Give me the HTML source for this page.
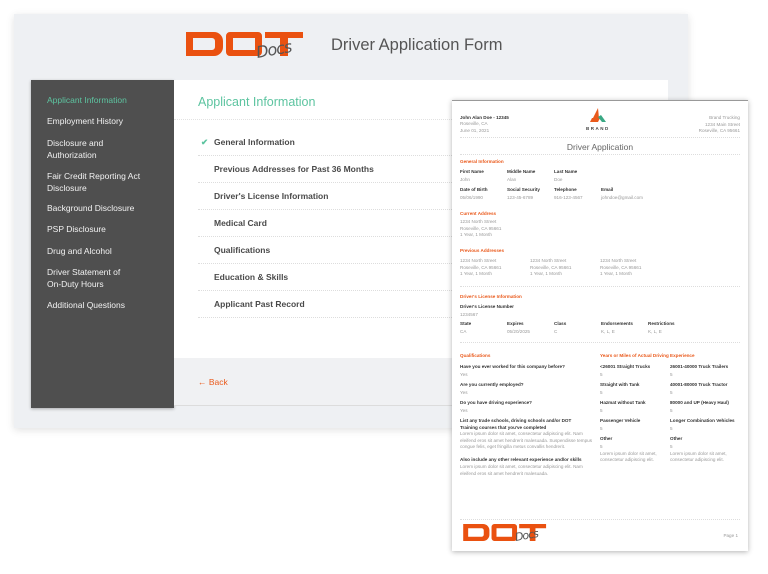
<!DOCTYPE html>
<html><head><meta charset="utf-8"><style>
*{margin:0;padding:0;box-sizing:border-box}
body{width:768px;height:574px;background:#fff;position:relative;overflow:hidden;font-family:"Liberation Sans",sans-serif}
.a{position:absolute;white-space:nowrap}
#panel{left:14px;top:14px;width:674px;height:414px;background:#eef0f3;box-shadow:0 2px 8px rgba(0,0,0,.12)}
#side{left:31px;top:80px;width:143px;height:328px;background:#4f4f4f;box-shadow:0 1px 3px rgba(0,0,0,.3)}
.si{position:absolute;left:16px;color:#f2f2f2;font-size:8.5px;line-height:12px}
#main{left:174px;top:80px;width:494px;height:278px;background:#fff}
#foot{left:174px;top:358px;width:494px;height:48px;background:#f0f1f3;border-bottom:1px solid #dcdcdc}
.row{position:absolute;left:24px;width:470px;height:27px;border-bottom:1px dotted #ddd;font-size:8.5px;color:#4a4a4a;font-weight:bold;padding-left:16px;line-height:27px}
#doc{left:452px;top:100px;width:296px;height:451px;background:#fff;box-shadow:0 1px 5px rgba(0,0,0,.3);border-top:1px solid #999}
.t{position:absolute;font-size:4.6px;color:#999;line-height:6.5px;white-space:nowrap}
.b{color:#333;font-weight:bold}
.o{color:#ea5a1c;font-weight:bold}
.hr{position:absolute;left:8px;width:280px;border-top:1px dotted #ddd}
.docs{font-family:"DejaVu Sans",sans-serif;font-style:italic;color:#555;transform:rotate(-10deg);letter-spacing:-1px}
</style></head><body>
<div class="a" id="panel"></div>
<div class="a" style="left:186px;top:32px;width:118px;height:24px">
<svg width="118" height="24" viewBox="0 0 118 24"><g fill="#ea5110">
<path d="M0 0h28a9 9 0 0 1 9 9v6a9 9 0 0 1-9 9H0zM7 6v12h19a3 3 0 0 0 3-3V9a3 3 0 0 0-3-3z"/>
<path d="M40 0h32a4 4 0 0 1 4 4v16a4 4 0 0 1-4 4H44a4 4 0 0 1-4-4V4a4 4 0 0 1 4-4zM47 6v12h22V6z"/>
<path d="M79 0h38v6h-15v18h-8V6H79z"/></g></svg></div>
<div class="a docs" style="left:256px;top:40px;font-size:16px">Docs</div>
<div class="a" style="left:331px;top:36px;font-size:16.5px;color:#555">Driver Application Form</div>
<div class="a" id="side">
<div class="si" style="top:14px;color:#5dc4a0">Applicant Information</div>
<div class="si" style="top:35px">Employment History</div>
<div class="si" style="top:57px">Disclosure and<br>Authorization</div>
<div class="si" style="top:90px">Fair Credit Reporting Act<br>Disclosure</div>
<div class="si" style="top:122px">Background Disclosure</div>
<div class="si" style="top:143px">PSP Disclosure</div>
<div class="si" style="top:165px">Drug and Alcohol</div>
<div class="si" style="top:186px">Driver Statement of<br>On-Duty Hours</div>
<div class="si" style="top:219px">Additional Questions</div>
</div>
<div class="a" id="main">
<div class="a" style="left:24px;top:15px;font-size:12.5px;color:#5dc4a0">Applicant Information</div>
<div style="position:absolute;left:0;top:39px;width:494px;border-top:1px dotted #e2e2e2"></div>
<div class="row" style="top:49px"><span style="position:absolute;left:3px;color:#5dc4a0">✔</span>General Information</div>
<div class="row" style="top:76px">Previous Addresses for Past 36 Months</div>
<div class="row" style="top:103px">Driver's License Information</div>
<div class="row" style="top:130px">Medical Card</div>
<div class="row" style="top:157px">Qualifications</div>
<div class="row" style="top:184px">Education &amp; Skills</div>
<div class="row" style="top:211px">Applicant Past Record</div>
</div>
<div class="a" id="foot"><div class="a" style="left:24px;top:19px;font-size:8.5px;color:#ea5a1c">← Back</div></div>
<div class="a" id="doc">
<div class="t b" style="left:8px;top:14px">John Alan Doe - 12345</div>
<div class="t" style="left:8px;top:20px">Roseville, CA<br>June 01, 2021</div>
<svg style="position:absolute;left:135px;top:7px" width="26" height="20" viewBox="0 0 26 20"><path d="M11 0l-5 10h6z" fill="#ea5a1c"/><path d="M5 10h8l-2 4H3z" fill="#ea5a1c"/><path d="M14 7l5 7h-4l-4-5z" fill="#3aa884"/></svg>
<div class="t b" style="left:134px;top:25px;font-size:4.5px;letter-spacing:1.5px;color:#444">BRAND</div>
<div class="t" style="right:8px;top:14px;text-align:right">Brand Trucking<br>1234 Main Street<br>Roseville, CA 95661</div>
<div class="hr" style="top:36px"></div>
<div class="t" style="left:0;width:296px;text-align:center;top:41px;font-size:8.5px;line-height:10px;color:#666">Driver Application</div>
<div class="hr" style="top:53px"></div>
<div class="t o" style="left:8px;top:58px">General Information</div>
<div class="t b" style="left:8px;top:68px">First Name</div><div class="t b" style="left:55px;top:68px">Middle Name</div><div class="t b" style="left:102px;top:68px">Last Name</div>
<div class="t" style="left:8px;top:76px">John</div><div class="t" style="left:55px;top:76px">Alan</div><div class="t" style="left:102px;top:76px">Doe</div>
<div class="t b" style="left:8px;top:86px">Date of Birth</div><div class="t b" style="left:55px;top:86px">Social Security</div><div class="t b" style="left:102px;top:86px">Telephone</div><div class="t b" style="left:149px;top:86px">Email</div>
<div class="t" style="left:8px;top:94px">05/06/1990</div><div class="t" style="left:55px;top:94px">123-45-6789</div><div class="t" style="left:102px;top:94px">916-123-4567</div><div class="t" style="left:149px;top:94px">johndoe@gmail.com</div>
<div class="t o" style="left:8px;top:110px">Current Address</div>
<div class="t" style="left:8px;top:118px">1234 North Street<br>Roseville, CA 95661<br>1 Year, 1 Month</div>
<div class="t o" style="left:8px;top:147px">Previous Addresses</div>
<div class="t" style="left:8px;top:157px">1234 North Street<br>Roseville, CA 95661<br>1 Year, 1 Month</div>
<div class="t" style="left:78px;top:157px">1234 North Street<br>Roseville, CA 95661<br>1 Year, 1 Month</div>
<div class="t" style="left:148px;top:157px">1234 North Street<br>Roseville, CA 95661<br>1 Year, 1 Month</div>
<div class="hr" style="top:185px"></div>
<div class="t o" style="left:8px;top:193px">Driver's License Information</div>
<div class="t b" style="left:8px;top:203px">Driver's License Number</div>
<div class="t" style="left:8px;top:211px">1234567</div>
<div class="t b" style="left:8px;top:220px">State</div><div class="t b" style="left:55px;top:220px">Expires</div><div class="t b" style="left:102px;top:220px">Class</div><div class="t b" style="left:149px;top:220px">Endorsements</div><div class="t b" style="left:196px;top:220px">Restrictions</div>
<div class="t" style="left:8px;top:228px">CA</div><div class="t" style="left:55px;top:228px">05/20/2025</div><div class="t" style="left:102px;top:228px">C</div><div class="t" style="left:149px;top:228px">K, L, E</div><div class="t" style="left:196px;top:228px">K, L, E</div>
<div class="hr" style="top:241px"></div>
<div class="t o" style="left:8px;top:252px">Qualifications</div>
<div class="t b" style="left:8px;top:263px">Have you ever worked for this company before?</div><div class="t" style="left:8px;top:271px">Yes</div>
<div class="t b" style="left:8px;top:281px">Are you currently employed?</div><div class="t" style="left:8px;top:289px">Yes</div>
<div class="t b" style="left:8px;top:299px">Do you have driving experience?</div><div class="t" style="left:8px;top:307px">Yes</div>
<div class="t b" style="left:8px;top:317px">List any trade schools, driving schools and/or DOT<br>Training courses that you've completed</div>
<div class="t" style="left:8px;top:330px">Lorem ipsum dolor sit amet, consectetur adipiscing elit. Nam<br>eleifend eros sit amet hendrerit malesuada. Suspendisse tempus<br>congue felis, eget fringilla metus convallis hendrerit.</div>
<div class="t b" style="left:8px;top:356px">Also include any other relevant experience and/or skills</div>
<div class="t" style="left:8px;top:363px">Lorem ipsum dolor sit amet, consectetur adipiscing elit. Nam<br>eleifend eros sit amet hendrerit malesuada.</div>
<div class="t o" style="left:148px;top:252px">Years or Miles of Actual Driving Experience</div>
<div class="t b" style="left:148px;top:263px">&lt;26001 Straight Trucks</div><div class="t b" style="left:218px;top:263px">26001-40000 Truck Trailers</div>
<div class="t" style="left:148px;top:271px">5</div><div class="t" style="left:218px;top:271px">5</div>
<div class="t b" style="left:148px;top:281px">Straight with Tank</div><div class="t b" style="left:218px;top:281px">40001-80000 Truck Tractor</div>
<div class="t" style="left:148px;top:289px">5</div><div class="t" style="left:218px;top:289px">5</div>
<div class="t b" style="left:148px;top:299px">Hazmat without Tank</div><div class="t b" style="left:218px;top:299px">80000 and UP (Heavy Haul)</div>
<div class="t" style="left:148px;top:307px">5</div><div class="t" style="left:218px;top:307px">5</div>
<div class="t b" style="left:148px;top:317px">Passenger Vehicle</div><div class="t b" style="left:218px;top:317px">Longer Combination Vehicles</div>
<div class="t" style="left:148px;top:325px">5</div><div class="t" style="left:218px;top:325px">5</div>
<div class="t b" style="left:148px;top:335px">Other</div><div class="t b" style="left:218px;top:335px">Other</div>
<div class="t" style="left:148px;top:343px">5<br>Lorem ipsum dolor sit amet,<br>consectetur adipiscing elit.</div>
<div class="t" style="left:218px;top:343px">5<br>Lorem ipsum dolor sit amet,<br>consectetur adipiscing elit.</div>
<div class="hr" style="top:418px"></div>
<svg style="position:absolute;left:11px;top:423px" width="84" height="17" viewBox="0 0 118 24"><g fill="#ea5110">
<path d="M0 0h28a9 9 0 0 1 9 9v6a9 9 0 0 1-9 9H0zM7 6v12h19a3 3 0 0 0 3-3V9a3 3 0 0 0-3-3z"/>
<path d="M40 0h32a4 4 0 0 1 4 4v16a4 4 0 0 1-4 4H44a4 4 0 0 1-4-4V4a4 4 0 0 1 4-4zM47 6v12h22V6z"/>
<path d="M79 0h38v6h-15v18h-8V6H79z"/></g></svg>
<div class="t docs" style="left:63px;top:429px;font-size:11px;line-height:12px">Docs</div>
<div class="t" style="right:10px;top:432px">Page 1</div>
</div>
</body></html>
